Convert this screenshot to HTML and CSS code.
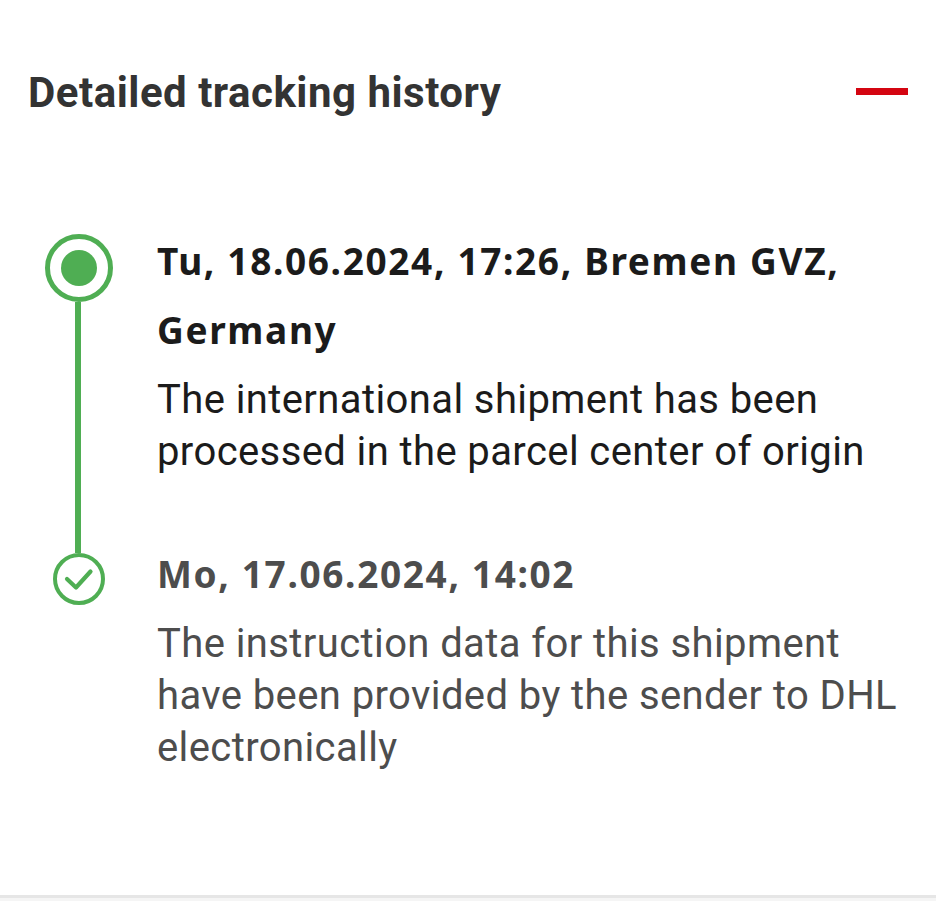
FILE: index.html
```html
<!DOCTYPE html>
<html lang="en">
<head>
<meta charset="utf-8">
<title>Detailed tracking history</title>
<link rel="stylesheet" href="styles.css">
</head>
<body>
<section class="card">
  <header class="card-head">
    <h2 class="card-title">Detailed tracking history</h2>
    <span class="collapse" aria-label="Collapse"></span>
  </header>
  <ol class="timeline">
    <li class="event event-current">
      <div class="rail">
        <span class="ring"><span class="ring-dot"></span></span>
        <span class="rail-line"></span>
      </div>
      <div class="info">
        <p class="when">Tu, 18.06.2024, 17:26, Bremen GVZ, Germany</p>
        <p class="what">The international shipment has been processed in the parcel center of origin</p>
      </div>
    </li>
    <li class="event event-done">
      <div class="rail">
        <span class="rail-line rail-line-top"></span>
        <svg class="check" width="52" height="52" viewBox="0 0 52 52" aria-hidden="true">
          <circle cx="26" cy="26" r="24" fill="none" stroke="#4fae53" stroke-width="4"/>
          <path d="M14 26 L23 34.5 L37.5 18.5" fill="none" stroke="#4fae53" stroke-width="4.2" stroke-linecap="round" stroke-linejoin="round"/>
        </svg>
      </div>
      <div class="info">
        <p class="when">Mo, 17.06.2024, 14:02</p>
        <p class="what">The instruction data for this shipment have been provided by the sender to DHL electronically</p>
      </div>
    </li>
  </ol>
</section>
<div class="below"></div>
</body>
</html>
```

FILE: styles.css
```css
html, body {
  margin: 0;
  padding: 0;
  background: #ffffff;
}

body {
  font-family: Roboto, "Noto Sans", "Liberation Sans", sans-serif;
  width: 936px;
  height: 901px;
  overflow: hidden;
}

.card {
  border-bottom: 3px solid #e6e6e6;
  padding: 68px 28px 0 0;
  height: 898px;
  box-sizing: border-box;
}

.card-head {
  display: flex;
  align-items: center;
  justify-content: space-between;
  padding-left: 28px;
}

.card-title {
  margin: 0;
  font-size: 42px;
  line-height: 50px;
  font-weight: 700;
  color: #333333;
  letter-spacing: 0.5px;
}

.collapse {
  display: block;
  width: 52px;
  height: 7px;
  background: #d40511;
  margin-top: -3px;
}

.timeline {
  list-style: none;
  margin: 108px 0 0 0;
  padding: 0;
}

.event {
  display: grid;
  grid-template-columns: 157px 1fr;
}

.rail {
  display: flex;
  flex-direction: column;
  align-items: center;
  padding-left: 1px;
}

.ring {
  margin-top: 8px;
  width: 68px;
  height: 68px;
  box-sizing: border-box;
  border: 5px solid #4fae53;
  border-radius: 50%;
  display: flex;
  align-items: center;
  justify-content: center;
}

.ring-dot {
  width: 36px;
  height: 36px;
  border-radius: 50%;
  background: #4fae53;
}

.rail-line {
  flex: 1;
  width: 6px;
  margin-left: -3px;
  background: #4fae53;
}

.rail-line-top {
  flex: 0 0 14px;
}

.check {
  display: block;
}

.info {
  min-width: 0;
}

.event-current .info {
  padding-bottom: 61px;
}

.when {
  margin: 0;
  font-family: "Noto Sans", Roboto, sans-serif;
  font-size: 37px;
  line-height: 69px;
  font-weight: 700;
  letter-spacing: 1.65px;
}

.what {
  margin: 10px 0 0 0;
  font-size: 40px;
  line-height: 52px;
  font-weight: 400;
  letter-spacing: 0.4px;
}

.event-current .when,
.event-current .what {
  color: #1b1b1b;
}

.event-done .when,
.event-done .what {
  color: #4d4d4d;
}

.below {
  height: 3px;
  background: #f5f5f5;
}
```
